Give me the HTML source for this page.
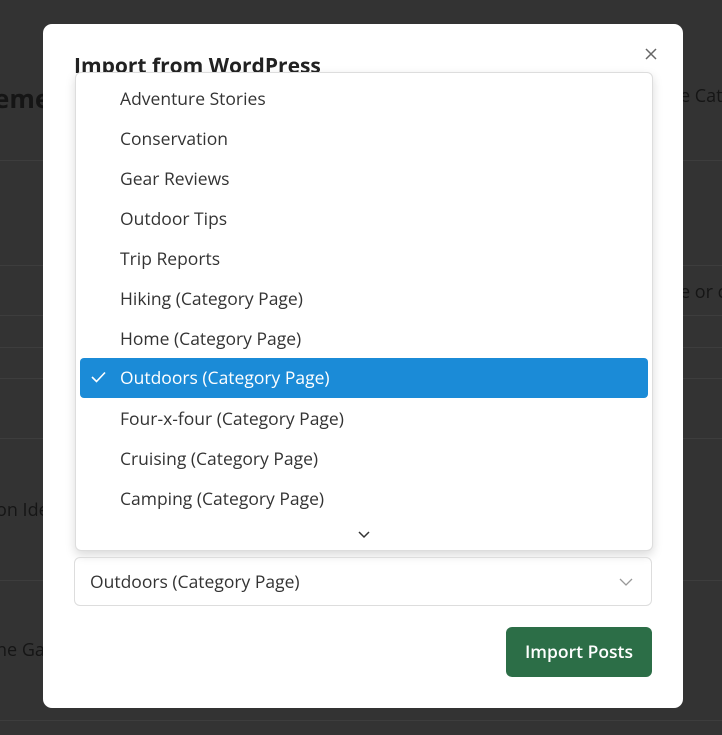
<!DOCTYPE html>
<html><head><style>
*{box-sizing:border-box;margin:0;padding:0}
body{width:722px;height:735px;background:#333;position:relative;overflow:hidden;font-family:"Open Sans","Liberation Sans",sans-serif}
.ln{position:absolute;left:0;right:0;height:1px;background:#3d3d3d}
.bg{position:absolute;color:#151515;font-size:18px;white-space:nowrap}
.modal{position:absolute;left:43px;top:24px;width:640px;height:684px;background:#fff;border-radius:9px}
h2{position:absolute;left:31px;top:28px;font-size:21px;font-weight:700;color:#222}
.x{position:absolute;left:600px;top:22px;width:16px;height:16px}
.dd{position:absolute;left:32px;top:48px;width:578px;height:479px;background:#fff;border:1px solid #ddd;border-radius:6px;box-shadow:0 4px 10px rgba(0,0,0,.15)}
.it{position:absolute;left:44px;font-size:17.5px;color:#333;height:40px;line-height:40px;top:6px}
.sel{position:absolute;left:4px;top:285px;width:568px;height:40px;background:#1b8bd7;border-radius:4px;color:#fff;font-size:17.5px;line-height:40px;padding-left:40px}
.box{position:absolute;left:31px;top:533px;width:578px;height:49px;border:1px solid #ddd;border-radius:6px;font-size:17.5px;color:#333;line-height:49px;padding-left:15px}
.btn{position:absolute;left:463px;top:603px;width:146px;height:50px;background:#2c6e47;border-radius:6px;color:#fff;font-size:17.5px;line-height:51px;text-align:center;font-weight:600}
</style></head><body>
<div class="ln" style="top:160px"></div><div class="ln" style="top:265px"></div><div class="ln" style="top:315px"></div><div class="ln" style="top:347px"></div><div class="ln" style="top:378px"></div><div class="ln" style="top:438px"></div><div class="ln" style="top:580px"></div><div class="ln" style="top:720px"></div>
<div class="bg" style="left:-6px;top:80px;font-size:26px;font-weight:700">eme</div>
<div class="bg" style="left:-4px;top:498px">on Ide</div>
<div class="bg" style="left:-4px;top:638px">ne Ga</div>
<div class="bg" style="left:680px;top:84px">e Cat</div>
<div class="bg" style="left:680px;top:280px">e or c</div>
<div class="modal">
<h2>Import from WordPress</h2>
<svg class="x" viewBox="0 0 16 16"><path d="M3 3L13 13M13 3L3 13" stroke="#666" stroke-width="1.5"/></svg>
<div class="dd">
<div class="it" style="top:6px">Adventure Stories</div>
<div class="it" style="top:46px">Conservation</div>
<div class="it" style="top:86px">Gear Reviews</div>
<div class="it" style="top:126px">Outdoor Tips</div>
<div class="it" style="top:166px">Trip Reports</div>
<div class="it" style="top:206px">Hiking (Category Page)</div>
<div class="it" style="top:246px">Home (Category Page)</div>
<div class="sel"><svg style="position:absolute;left:11px;top:13px" width="15" height="12" viewBox="0 0 15 12"><path d="M1 6L5.5 10.5L14 1.5" stroke="#fff" stroke-width="1.6" fill="none"/></svg>Outdoors (Category Page)</div>
<div class="it" style="top:326px">Four-x-four (Category Page)</div>
<div class="it" style="top:366px">Cruising (Category Page)</div>
<div class="it" style="top:406px">Camping (Category Page)</div>
<svg style="position:absolute;left:282px;top:458px" width="12" height="8" viewBox="0 0 12 8"><path d="M1 1L6 6L11 1" stroke="#333" stroke-width="1.5" fill="none"/></svg>
</div>
<div class="box">Outdoors (Category Page)<svg style="position:absolute;right:18px;top:20px" width="14" height="8" viewBox="0 0 14 8"><path d="M1 1L7 7L13 1" stroke="#999" stroke-width="1.3" fill="none"/></svg></div>
<div class="btn">Import Posts</div>
</div>
</body></html>
